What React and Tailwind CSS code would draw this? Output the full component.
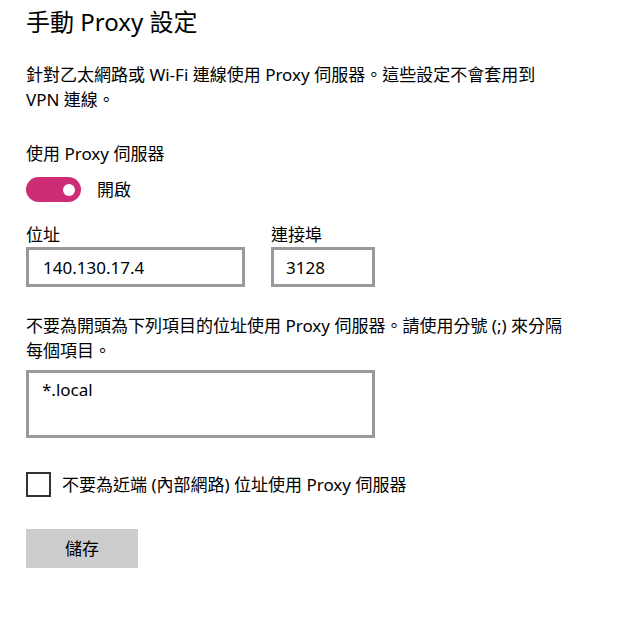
import { useState } from "react";

const font = { fontFamily: '"Noto Sans", "Noto Sans CJK TC", sans-serif' };

const App = () => {
    const [on, setOn] = useState(true);
    const [bypassLocal, setBypassLocal] = useState(false);

    return (
        <div
            className="min-h-screen w-[637px] bg-white text-black pl-[26px] pr-6 pt-[4px] flex flex-col items-start"
            style={font}
        >
            {/* Title */}
            <h1 className="text-[24px] leading-[36px] font-normal">手動 Proxy 設定</h1>

            <p className="mt-[22px] text-[17px] leading-[25px] w-[530px]">
                針對乙太網路或 Wi-Fi 連線使用 Proxy 伺服器。這些設定不會套用到 VPN 連線。
            </p>

            <div className="mt-[29px] text-[17px] leading-[25px]">使用 Proxy 伺服器</div>

            {/* Toggle */}
            <div className="mt-[11px] flex items-center gap-4">
                <button
                    onClick={() => setOn(!on)}
                    className={
                        on
                            ? "w-[55px] h-[25px] rounded-full bg-[#cd2d74] flex items-center justify-end pr-[6px]"
                            : "w-[55px] h-[25px] rounded-full border-2 border-black flex items-center justify-start pl-[5px]"
                    }
                >
                    <span className={on ? "w-[12px] h-[12px] rounded-full bg-white" : "w-[12px] h-[12px] rounded-full bg-black"} />
                </button>
                <span className="text-[17px] leading-[25px]">{on ? "開啟" : "關閉"}</span>
            </div>

            {/* Address + port */}
            <div className="mt-[21px] flex gap-[26px]">
                <div className="flex flex-col">
                    <label className="text-[17px] leading-[24px]">位址</label>
                    <input
                        defaultValue="140.130.17.4"
                        className="w-[219px] h-[40px] border-[3px] border-[#999999] px-[14px] text-[17px] outline-none"
                        style={font}
                    />
                </div>
                <div className="flex flex-col">
                    <label className="text-[17px] leading-[24px]">連接埠</label>
                    <input
                        defaultValue="3128"
                        className="w-[104px] h-[40px] border-[3px] border-[#999999] px-[12px] text-[17px] outline-none"
                        style={font}
                    />
                </div>
            </div>

            <p className="mt-[26px] text-[17px] leading-[25px] w-[545px]">
                不要為開頭為下列項目的位址使用 Proxy 伺服器。請使用分號 (;) 來分隔每個項目。
            </p>

            <textarea
                defaultValue="*.local"
                className="mt-[7px] w-[349px] h-[68px] border-[3px] border-[#999999] px-[13px] py-[4px] text-[17px] leading-[25px] resize-none outline-none"
                style={font}
            />

            {/* Checkbox */}
            <label className="mt-[34px] flex items-center gap-[11px] cursor-pointer">
                <input
                    type="checkbox"
                    checked={bypassLocal}
                    onChange={() => setBypassLocal(!bypassLocal)}
                    className="appearance-none w-[25px] h-[25px] border-2 border-[#333333] bg-white checked:bg-[#cd2d74]"
                />
                <span className="text-[17px] leading-[25px]">不要為近端 (內部網路) 位址使用 Proxy 伺服器</span>
            </label>

            <button className="mt-[32px] w-[112px] h-[39px] bg-[#cccccc] text-[17px]">儲存</button>
        </div>
    );
};

export default App;
